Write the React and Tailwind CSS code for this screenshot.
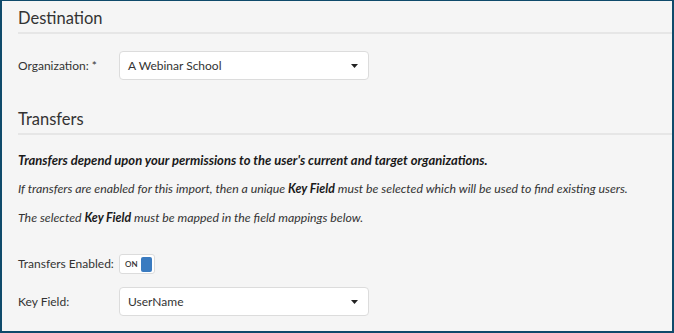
import React from "react";

function Caret() {
  return (
    <svg width="7" height="4" viewBox="0 0 7 4" className="shrink-0">
      <path d="M0 0 L7 0 L3.5 4 Z" fill="#222" />
    </svg>
  );
}

function Select({ value }) {
  return (
    <div className="flex h-[29px] w-[250px] items-center justify-between rounded-[4px] border border-[#dcdcdc] bg-white pl-[8px] pr-[10px] text-[12px] text-[#333]">
      <span>{value}</span>
      <Caret />
    </div>
  );
}

function SectionHeading({ title }) {
  return (
    <div className="border-b-2 border-[#e6e6e6] pb-[1px]">
      <h2 className="h-[26px] text-[16.5px] font-normal leading-[26px] text-[#333]">{title}</h2>
    </div>
  );
}

function Row({ label, children, className = "" }) {
  return (
    <div className={`flex items-center ${className}`}>
      <div className="w-[101px] whitespace-nowrap text-[12px] text-[#333]">{label}</div>
      {children}
    </div>
  );
}

export default function App() {
  return (
    <div
      className="box-border h-[333px] w-[674px] overflow-hidden border-x-2 border-b-2 border-t border-[#0f4a6b] bg-[#f5f5f5] pl-[16px]"
      style={{ fontFamily: 'Lato, "Open Sans", sans-serif' }}
    >
      <div className="pt-[4px]">
        <SectionHeading title="Destination" />
      </div>

      <Row label="Organization: *" className="mt-[17px]">
        <Select value="A Webinar School" />
      </Row>

      <div className="mt-[26px]">
        <SectionHeading title="Transfers" />
      </div>

      <div className="mt-[15px] flex flex-col gap-[9px] whitespace-nowrap text-[12.3px] leading-[20px] text-[#333]">
        <p className="text-[13px] font-bold italic text-[#1a1a1a]">
          Transfers depend upon your permissions to the user's current and target organizations.
        </p>
        <p className="italic">
          If transfers are enabled for this import, then a unique <b className="text-[#1a1a1a]">Key Field</b> must be
          selected which will be used to find existing users.
        </p>
        <p className="italic">
          The selected <b className="text-[#1a1a1a]">Key Field</b> must be mapped in the field mappings below.
        </p>
      </div>

      <Row label="Transfers Enabled:" className="mt-[26px]">
        <div className="flex h-[20px] w-[36px] items-center justify-between rounded-[3px] border border-[#dcdcdc] bg-white pl-[5px] pr-[2px]">
          <span className="text-[8px] font-semibold text-[#333]">ON</span>
          <span className="h-[15px] w-[11px] rounded-[2px] bg-[#3a7bc0]" />
        </div>
      </Row>

      <Row label="Key Field:" className="mt-[13px]">
        <Select value="UserName" />
      </Row>
    </div>
  );
}
